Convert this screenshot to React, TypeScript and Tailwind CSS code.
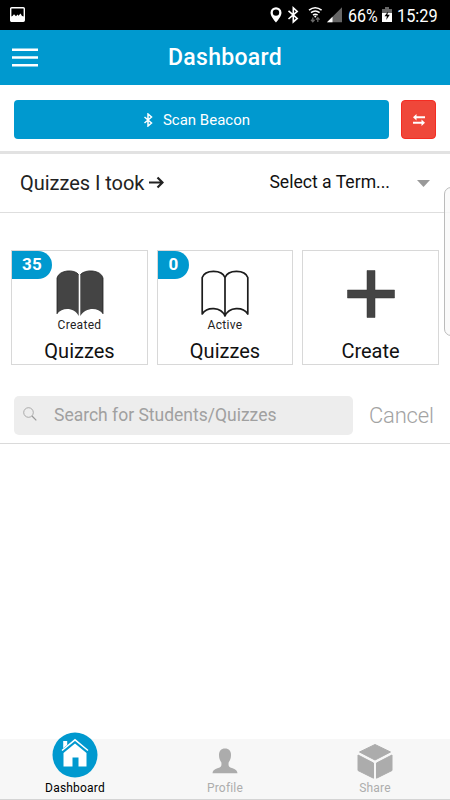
import React from 'react';

function StatusBar() {
  return (
    <div className="flex h-[30px] bg-black text-white">
      <svg className="ml-[10px] mt-[7px] h-[15px] w-[15px] shrink-0" viewBox="0 0 15 15">
        <rect x=".7" y=".7" width="13.6" height="13.6" rx="1" fill="none" stroke="#fff" strokeWidth="1.4" />
        <path d="M1 9.500 2.500 9 4 7.300 6 9.300 7.500 7.500 8.500 8.700 10.500 6.500 12 9 14 9.500V14H1Z" fill="#fff" />
      </svg>
      <svg className="ml-[244px] h-[30px] w-[76px] shrink-0" viewBox="269 0 76 30">
        <path fillRule="evenodd" d="M276 7.200a5.500 5.500 0 0 0-5.500 5.500c0 3.800 5.500 9.800 5.500 9.800s5.500-6 5.500-9.800A5.500 5.500 0 0 0 276 7.200Zm0 2.200a3.200 3.200 0 1 1 0 6.400 3.200 3.200 0 0 1 0-6.400Z" fill="#fff" />
        <path d="m288.500 10.800 8.700 7.600-3.900 3.500V7.900l3.900 3.500-8.700 7.600" fill="none" stroke="#fff" strokeWidth="1.600" />
        <path d="M309 10.200q6.200-5 12.600 0M311 12.700q4.200-3.400 8.600 0M313 15.100q2.300-1.800 4.600 0" fill="none" stroke="#fff" strokeWidth="1.500" />
        <circle cx="315.300" cy="16.600" r="1" fill="#fff" />
        <path d="M312.800 17.500v4M311 19.800l1.800 1.900 1.800-1.900M317.800 22v-4M316 19.600l1.800-1.900 1.800 1.900" fill="none" stroke="#686868" strokeWidth="1.300" />
        <path d="M327 22.300 342 7.200v15.100Z" fill="#666" />
        <path d="M327 22.300 332.500 16.800v5.500Z" fill="#fff" />
      </svg>
      <div className="ml-[3px] w-[30px] shrink-0 text-[19px] leading-[31px]"><span className="inline-block origin-left scale-x-[.84]">66%</span></div>
      <svg className="ml-[4px] mt-[7px] h-[16px] w-[10px] shrink-0" viewBox="0 0 10 16">
        <path d="M3 0h4v2h3v4H0V2h3Z" fill="#666" />
        <path d="M0 6h10v9H0Z" fill="#fff" />
        <path d="M6.200 4.200 2.500 9.300h2.400L4.200 13 7.800 7.800H5.400Z" fill="#000" />
      </svg>
      <div className="ml-[5px] whitespace-nowrap text-[19px] leading-[31px]"><span className="inline-block origin-left scale-x-[.86]">15:29</span></div>
    </div>
  );
}

function Badge({ value, width }: { value: string; width: string }) {
  return (
    <div className={`absolute left-0 top-0 flex h-[28px] items-center justify-center rounded-r-[14px] bg-[#0099cf] pb-px text-[17px] font-bold tracking-[.3px] text-white ${width}`}>{value}</div>
  );
}

function BookFilled() {
  return (
    <svg className="h-[48px] w-[50px]" viewBox="0 0 50 48">
      <path d="M2 8C4-.5 20-1 23.700 4.500V46C20 38 8 36 2 44Z" fill="#444" />
      <path d="M48 8C46-.5 30-1 25.300 4.500V46C30 38 42 36 48 44Z" fill="#444" />
      <path d="M2 44V8C4-.5 20-1 23.500 4.500M48 44V8C46-.5 30-1 25.500 4.500" fill="none" stroke="#222" strokeWidth=".8" />
    </svg>
  );
}

function BookOutline() {
  return (
    <svg className="h-[48px] w-[50px]" viewBox="0 0 50 48" fill="none" stroke="#1c1c1c" strokeWidth="1.700" strokeLinejoin="round">
      <path d="M25 7.500C22-.7 5-.7 2.200 7.500V44C7 36.500 21 36.500 25 46 29 36.500 43 36.500 47.800 44V7.500C45-.7 28-.7 25 7.500V45" />
    </svg>
  );
}

function Card({ badge, badgeWidth = '', art, small, label }: { badge?: string; badgeWidth?: string; art: React.ReactNode; small?: string; label: string }) {
  return (
    <div className="relative flex h-[115px] flex-col items-center border-[1.500px] border-[#d8d8d8] bg-white">
      {badge && <Badge value={badge} width={badgeWidth} />}
      <div className="mt-[19px] h-[48px]">{art}</div>
      <div className="h-[14px] text-[12px] leading-[14px] tracking-[.3px] text-[#222]">{small}</div>
      <div className="mt-[7px] text-[20px] leading-[25px] text-[#111]">{label}</div>
    </div>
  );
}

function TabBar() {
  return (
    <nav className="mt-[295px] grid h-[61px] grid-cols-3 border-b border-[#d4d4d4] bg-[#f7f7f7] text-[12px] leading-[14px] tracking-[.2px] text-[#adadad]">
      <div className="flex flex-col items-center text-black">
        <svg className="-mt-[7px] h-[46px] w-[46px]" viewBox="0 0 46 46">
          <circle cx="23" cy="23" r="22.500" fill="#0099cf" />
          <path d="M11.500 21 23 11.500 34.500 21V34.500H26.500v-9h-6v9h-9Z" fill="#fff" />
          <path d="m10 18.500 13-10.700 13 10.700" fill="none" stroke="#fff" strokeWidth="1.500" />
          <path d="M11.200 9h4v4l-4 3.300Z" fill="#fff" />
        </svg>
        <span className="mt-[3px]">Dashboard</span>
      </div>
      <div className="flex flex-col items-center">
        <svg className="mt-[9px] h-[26px] w-[26px]" viewBox="0 0 26 26">
          <path d="M13 .5c-4 0-6 2.500-6 6.500 0 3 .8 5.500 2.300 7.300.4 2.500.2 4-1.300 4.900-2 1.200-7.200 1.500-7.500 6h25c-.3-4.500-5.500-4.800-7.500-6-1.500-.9-1.700-2.400-1.300-4.900C18.200 12.500 19 10 19 7c0-4-2-6.500-6-6.500Z" fill="#acacac" />
        </svg>
        <span className="mt-[7px]">Profile</span>
      </div>
      <div className="flex flex-col items-center">
        <svg className="mt-[4px] h-[37px] w-[36px]" viewBox="0 0 36 37" fill="#acacac" stroke="#acacac" strokeWidth="1" strokeLinejoin="round">
          <path d="M18 1.500 33.500 9 18 17 2.500 9Z" />
          <path d="M1 12 16.500 20v15.200L1 27.500Z" />
          <path d="M35 12 19.500 20v15.200L35 27.500Z" />
        </svg>
        <span className="mt-px">Share</span>
      </div>
    </nav>
  );
}

export default function App() {
  return (
    <main className="relative h-[800px] w-[450px] overflow-hidden bg-white font-['Roboto',sans-serif]">
      <StatusBar />
      <header className="grid h-[55px] grid-cols-[38px_1fr_38px] items-center bg-[#0099cf] px-[12px] text-white">
        <svg className="h-[19px] w-[26px]" viewBox="0 0 26 19">
          <path d="M0 1.800h26M0 9.500h26M0 17.200h26" stroke="#fff" strokeWidth="2.600" />
        </svg>
        <h1 className="pt-[2px] text-center text-[23px] font-medium tracking-[.3px]">Dashboard</h1>
      </header>
      <section className="flex h-[69px] gap-[12px] border-b-[3px] border-[#e2e2e2] pl-[14px] pt-[15px]">
        <button className="flex h-[39px] w-[375px] items-center justify-center rounded-[4px] bg-[#0099cf] pr-[10px] text-[15px] text-white">
          <svg className="mr-[10px] h-[14px] w-[10px]" viewBox="0 0 10 14"><path d="m1.500 4 7 6L5 13V1l3.500 3-7 6" fill="none" stroke="#fff" strokeWidth="1.500" /></svg>
          <span className="pt-[2px]">Scan Beacon</span>
        </button>
        <button className="flex h-[39px] w-[35px] items-center justify-center rounded-[4px] border border-[#f52c22] bg-[#ef473a]">
          <svg className="h-[12px] w-[12px]" viewBox="0 0 12 12" fill="#fff"><path d="M0 3.200 3.500 0v2.200H12v2H3.500v2.200Zm12 5.600L8.500 5.600v2.200H0v2h8.500V12Z" /></svg>
        </button>
      </section>
      <section className="flex h-[59px] items-center border-b-[1.500px] border-[#dedede] pl-[20px]">
        <span className="text-[20px] tracking-[-.04px] text-[#222]">Quizzes I took</span>
        <svg className="ml-[5px] h-[14px] w-[15px]" viewBox="0 0 15 14"><path d="M0 6.500h13M8.500 1.500l5 5-5 5" fill="none" stroke="#222" strokeWidth="2.200" /></svg>
        <span className="ml-auto mb-px text-[17.600px] text-[#111]">Select a Term...</span>
        <svg className="mr-[20px] ml-[27px] h-[7px] w-[13px]" viewBox="0 0 13 7"><path d="M0 0h13L6.500 7Z" fill="#999" /></svg>
      </section>
      <section className="mt-[37px] grid grid-cols-[137px_136px_137px] gap-[9px] pl-[11px]">
        <Card badge="35" badgeWidth="w-[40px]" art={<BookFilled />} small="Created" label="Quizzes" />
        <Card badge="0" badgeWidth="w-[31px]" art={<BookOutline />} small="Active" label="Quizzes" />
        <Card art={<svg className="h-[48px] w-[48px]" viewBox="0 0 48 48"><path d="M20 .5h8V20h19.500v8H28v19.500h-8V28H.5v-8H20Z" fill="#444" stroke="#333" strokeWidth=".5" /></svg>} label="Create" />
      </section>
      <section className="flex h-[79px] items-start border-b border-[#dadada] pl-[14px] pt-[31px]">
        <div className="flex h-[39px] w-[339px] items-center rounded-[5px] bg-[#ededed] pl-[9px] text-[17.500px] text-[#a0a0a0]">
          <svg className="mb-[3px] h-[14px] w-[14px]" viewBox="0 0 14 14" fill="none" stroke="#999"><circle cx="5.500" cy="5.500" r="4.800" strokeWidth=".8" /><path d="m9 9 4.300 4.300" strokeWidth="1.200" /></svg>
          <span className="ml-[17px]">Search for Students/Quizzes</span>
        </div>
        <span className="ml-[16px] text-[22px] font-light leading-[39px] tracking-[-.2px] text-[#a3a3a3]">Cancel</span>
      </section>
      <TabBar />
      <div className="absolute left-[444px] top-[187px] h-[149px] w-[20px] rounded-l-[7px] border border-[#bbb] bg-[#f9f9f9]/80" />
    </main>
  );
}
